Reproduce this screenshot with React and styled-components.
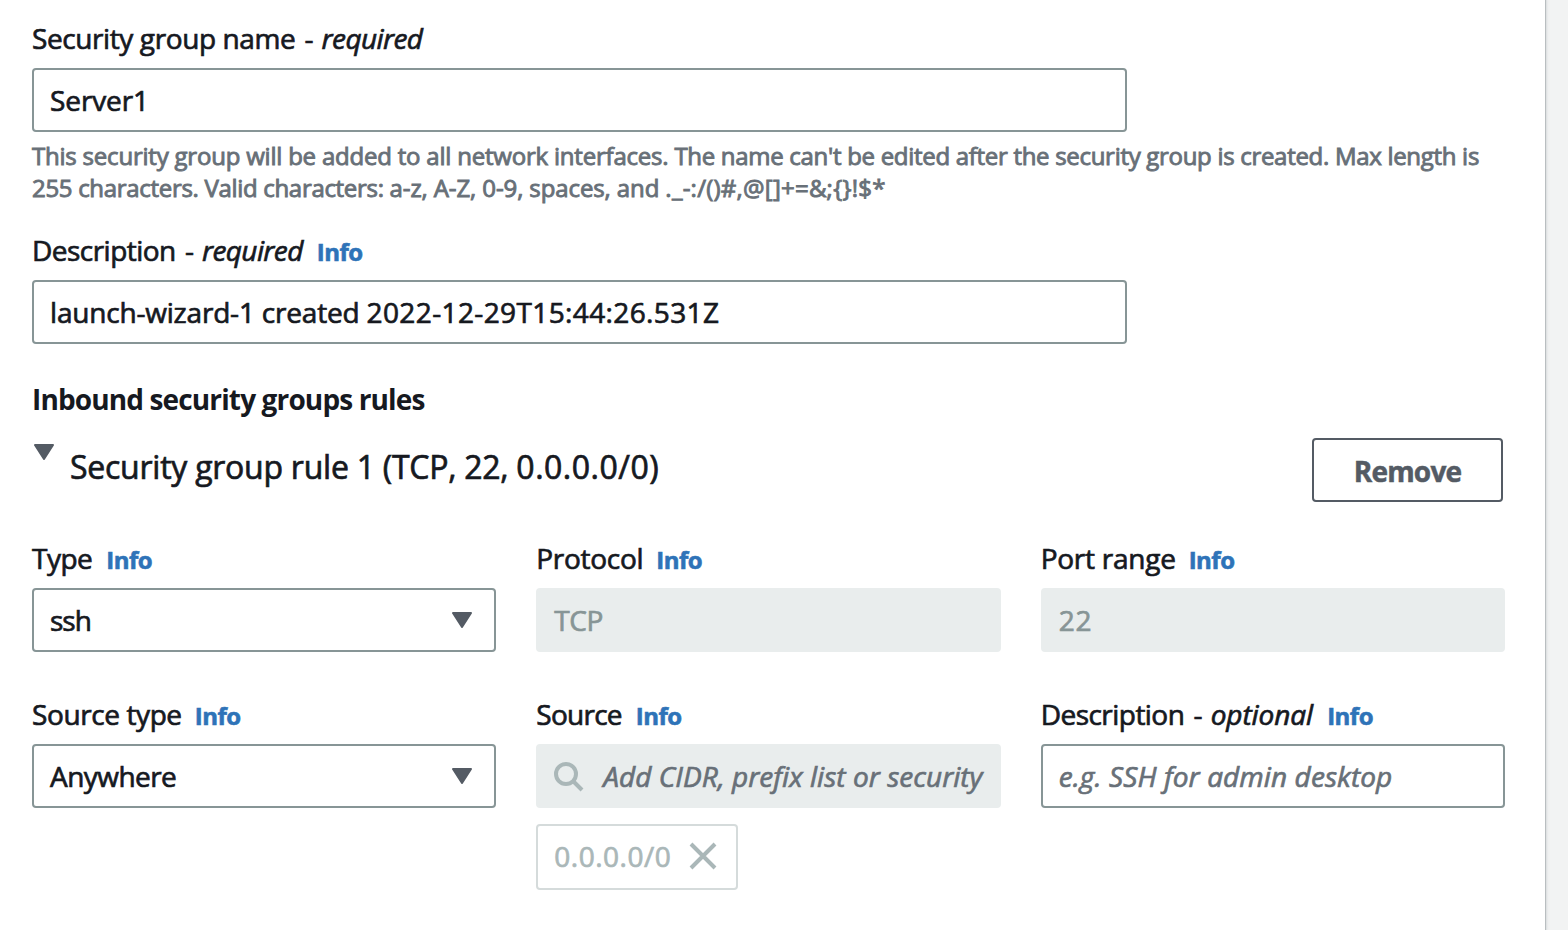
import React from "react";
import styled, { createGlobalStyle } from "styled-components";

const GlobalStyle = createGlobalStyle`
  *, *::before, *::after { box-sizing: border-box; }
  body {
    margin: 0;
    background: #f2f3f3;
    color: #16191f;
    font-family: "Open Sans", "Noto Sans", sans-serif;
    font-size: 28px;
    line-height: 44px;
    overflow: hidden;
  }
`;

const Panel = styled.main`
  width: 1545px;
  height: 930px;
  padding: 16px 40px 0 32px;
  background: #fff;
  box-shadow: 1px 0 0 #b9bec0, 2px 0 1px #dfe2e3, 3px 0 2px #e9ebeb;
`;

const Text = styled.span`
  letter-spacing: ${(p) => p.$track || 0}px;
  white-space: pre;
  -webkit-text-stroke: ${(p) => p.$stroke || 0.7}px currentColor;
`;

const Emphasis = styled(Text)`
  font-style: italic;
  margin-left: ${(p) => p.$gap || 8}px;
`;

const InfoLink = styled.a`
  margin-left: ${(p) => p.$gap || 14}px;
  color: #2e73b8;
  font-size: 24px;
  font-weight: 700;
  letter-spacing: -0.5px;
  -webkit-text-stroke: 0.6px currentColor;
  cursor: pointer;
`;

const Field = styled.div`
  display: flex;
  flex-direction: column;
  min-width: 0;
  margin-top: ${(p) => p.$top || 0}px;
`;

const Label = styled.div`
  display: flex;
  align-items: baseline;
  height: 44px;
  margin-bottom: 8px;
`;

const Control = styled.div`
  display: flex;
  align-items: center;
  width: ${(p) => (p.$wide ? "1095px" : "100%")};
  height: 64px;
  padding: 0 16px;
  border: 2px solid ${(p) => (p.$disabled ? "#e9eded" : "#879596")};
  border-radius: 4px;
  background: ${(p) => (p.$disabled ? "#e9eded" : "#fff")};
  color: ${(p) => (p.$disabled ? "#879596" : "#16191f")};
`;

const Placeholder = styled(Text)`
  color: #687078;
  font-style: italic;
`;

const Hint = styled.p`
  margin: 8px 0 0;
  color: #687078;
  font-size: 24px;
  line-height: 32px;
`;

const HintLine = styled.span`
  display: block;
  white-space: nowrap;
`;

const SectionTitle = styled.h3`
  margin: 33px 0 0;
  font-size: 28px;
  font-weight: 700;
  line-height: 44px;
  letter-spacing: -0.87px;
`;

const RuleHeader = styled.div`
  display: flex;
  align-items: flex-start;
  height: 64px;
  margin-top: 17px;
  padding: 0 2px;
`;

const RuleTitle = styled.div`
  flex: 1;
  margin: 7px 0 0 16px;
  font-size: 32px;
  white-space: nowrap;
`;

const RemoveButton = styled.button`
  width: 191px;
  height: 64px;
  padding: 1px 0 0;
  border: 2px solid #545b64;
  border-radius: 4px;
  background: #fff;
  color: #545b64;
  font: 700 28px/44px "Open Sans", sans-serif;
  letter-spacing: -0.8px;
  -webkit-text-stroke: 0.5px currentColor;
`;

const HeaderCaret = styled.svg`
  margin-top: 6px;
`;

const FieldCaret = styled.svg`
  margin: 0 6px 0 auto;
`;

const RuleGrid = styled.div`
  display: grid;
  grid-template-columns: repeat(3, 1fr);
  gap: 40px;
  width: 1473px;
  margin-top: 34px;
`;

const SearchIcon = styled.svg`
  flex: none;
  margin: 2px 19px 0 0;
`;

const Token = styled.div`
  display: flex;
  align-items: center;
  width: 202px;
  height: 66px;
  margin-top: 16px;
  padding: 0 16px 2px;
  border: 2px solid #d5dbdb;
  border-radius: 4px;
  color: #aab7b8;
`;

const CloseIcon = styled.svg`
  margin: -1px 0 0 18px;
`;

const Caret = ({ as: Icon }) => (
  <Icon width="20" height="16" viewBox="0 0 20 16">
    <path
      d="M1 1h18l-9 14z"
      fill="#545b64"
      stroke="#545b64"
      strokeWidth="2"
      strokeLinejoin="round"
    />
  </Icon>
);

const FormField = ({ label, track, em, emTrack, info, gap, top, children }) => (
  <Field $top={top}>
    <Label>
      <Text $track={track}>{label}</Text>
      {em && (
        <>
          <Text $track={2}>{" -"}</Text>
          <Emphasis $track={emTrack} $gap={6}>
            {em}
          </Emphasis>
        </>
      )}
      {info && <InfoLink $gap={gap}>Info</InfoLink>}
    </Label>
    {children}
  </Field>
);

const Select = ({ value, track }) => (
  <Control>
    <Text $track={track}>{value}</Text>
    <Caret as={FieldCaret} />
  </Control>
);

export default function App() {
  return (
    <>
      <GlobalStyle />
      <Panel>
        <FormField label="Security group name" track={-0.4} em="required" emTrack={-0.6}>
          <Control $wide>
            <Text $track={-0.1}>Server1</Text>
          </Control>
          <Hint>
            <HintLine>
              <Text $track={-0.21} $stroke={0.9}>
                {"This security group will be added to all network interfaces. "}
              </Text>
              <Text $track={-0.3} $stroke={0.9}>
                {"The name can't be edited after the security group is created. Max length is"}
              </Text>
            </HintLine>
            <HintLine>
              <Text $track={-0.31} $stroke={0.9}>
                {"255 characters. Valid characters: "}
              </Text>
              <Text $track={-0.109} $stroke={0.9}>
                {"a-z, A-Z, 0-9, spaces, and "}
              </Text>
              <Text $track={0.24} $stroke={0.9}>
                {"._-:/()#,@[]+=&;{}!$*"}
              </Text>
            </HintLine>
          </Hint>
        </FormField>

        <FormField
          top={24}
          label="Description"
          track={-0.53}
          em="required"
          emTrack={-0.6}
          info
        >
          <Control $wide>
            <Text $track={-0.19}>{"launch-wizard-1 created "}</Text>
            <Text $track={0.38}>2022-12-29T15:44:26.531Z</Text>
          </Control>
        </FormField>

        <SectionTitle>Inbound security groups rules</SectionTitle>

        <RuleHeader>
          <Caret as={HeaderCaret} />
          <RuleTitle>
            <Text $track={-0.25}>{"Security group rule 1 "}</Text>
            <Text $track={-0.27}>{"(TCP, 22, "}</Text>
            <Text $track={0.5}>0.0.0.0/0)</Text>
          </RuleTitle>
          <RemoveButton>Remove</RemoveButton>
        </RuleHeader>

        <RuleGrid>
          <FormField label="Type" track={-0.5} gap={14} info>
            <Select value="ssh" track={-1} />
          </FormField>
          <FormField label="Protocol" track={-0.3} gap={13} info>
            <Control $disabled>
              <Text $track={-0.5}>TCP</Text>
            </Control>
          </FormField>
          <FormField label="Port range" track={-0.25} gap={13} info>
            <Control $disabled>
              <Text $track={0.9}>22</Text>
            </Control>
          </FormField>
          <FormField label="Source type" track={-0.4} gap={13} info>
            <Select value="Anywhere" track={-0.55} />
          </FormField>
          <FormField label="Source" track={-0.75} gap={14} info>
            <Control $disabled>
              <SearchIcon width="30" height="30" viewBox="0 0 30 30">
                <circle cx="12" cy="12" r="10" fill="none" stroke="#aab7b8" strokeWidth="4" />
                <path d="M19 19l9 9" stroke="#aab7b8" strokeWidth="4" />
              </SearchIcon>
              <Placeholder $track={0.04}>Add CIDR, prefix list or security</Placeholder>
            </Control>
            <Token>
              <Text $track={0.5}>0.0.0.0/0</Text>
              <CloseIcon width="28" height="28" viewBox="0 0 28 28">
                <path d="M2 2l24 24M26 2L2 26" stroke="#aab7b8" strokeWidth="4" />
              </CloseIcon>
            </Token>
          </FormField>
          <FormField label="Description" track={-0.53} em="optional" emTrack={-0.07} info>
            <Control>
              <Placeholder $track={0.1}>e.g. SSH for admin desktop</Placeholder>
            </Control>
          </FormField>
        </RuleGrid>
      </Panel>
    </>
  );
}
